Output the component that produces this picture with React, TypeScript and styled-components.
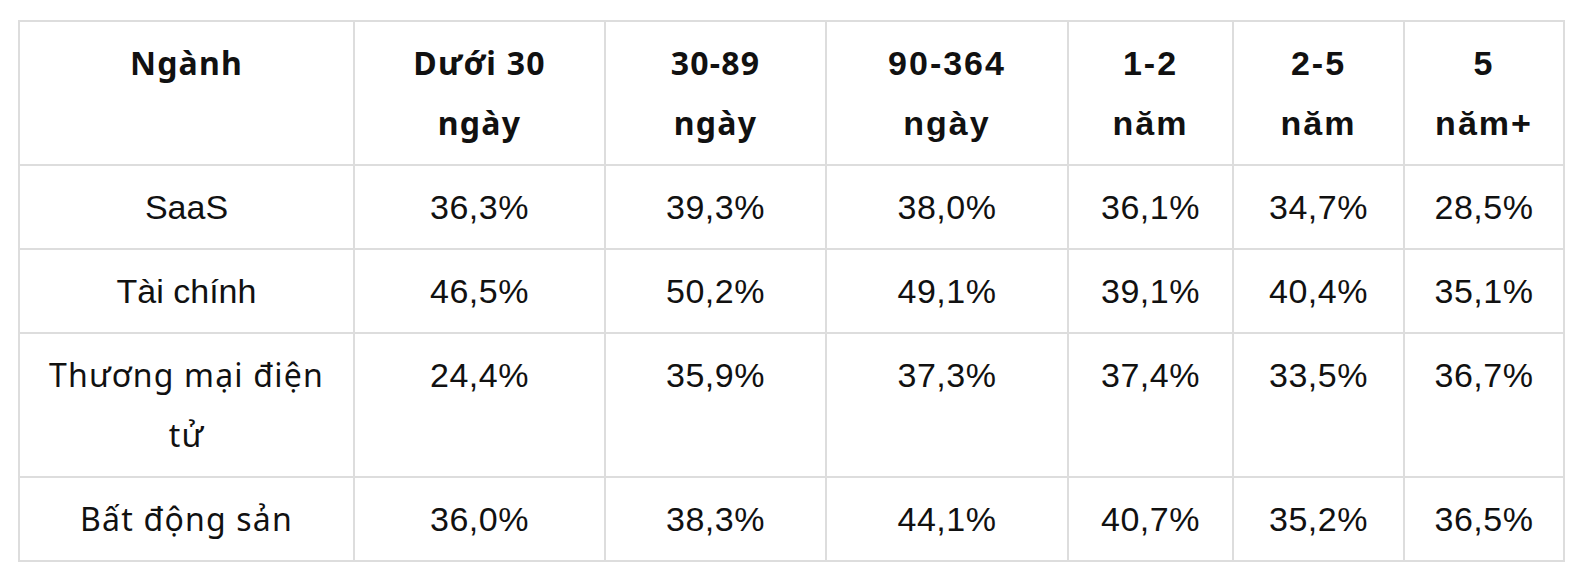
import * as React from 'react';
import styled, { createGlobalStyle } from 'styled-components';

const GlobalStyle = createGlobalStyle`
  html, body {
    margin: 0;
    padding: 0;
    background: #ffffff;
  }
`;

const Page = styled('div')`
  padding: 20px 0 0 18px;
`;

const Table = styled('table')`
  border-collapse: collapse;
  table-layout: fixed;
  color: #111111;
`;

const spacing = (alt?: boolean, head?: boolean, num?: boolean) => {
  if (alt) return '1.2px';
  if (head) return '2px';
  if (num) return '0.5px';
  return 'normal';
};

const Cell = styled('td')<{ $alt?: boolean; $head?: boolean; $num?: boolean; $w?: number }>`
  box-sizing: border-box;
  ${({ $w }) => ($w ? `width: ${$w}px;` : '')}
  border: 2px solid #dddddd;
  padding: 11px 8px 11px;
  text-align: center;
  vertical-align: top;
  font-family: ${({ $alt }) => ($alt ? '"Noto Sans", Lato, sans-serif' : '"Liberation Sans", Arial, sans-serif')};
  font-size: ${({ $alt }) => ($alt ? '32px' : '34px')};
  font-weight: ${({ $head }) => ($head ? 700 : 400)};
  letter-spacing: ${({ $alt, $head, $num }) => spacing($alt, $head, $num)};
  line-height: 60px;
`;

// column widths, measured from the grid lines
const widths = [335, 251, 221, 242, 165, 171, 160];

type C = { lines: string[]; alt?: boolean; num?: boolean };

const header: C[] = [
  { lines: ['Ngành'], alt: true },
  { lines: ['Dưới 30', 'ngày'], alt: true },
  { lines: ['30-89', 'ngày'], alt: true },
  { lines: ['90-364', 'ngày'] },
  { lines: ['1-2', 'năm'] },
  { lines: ['2-5', 'năm'] },
  { lines: ['5', 'năm+'] },
];

const rows: C[][] = [
  [{ lines: ['SaaS'] }, '36,3%', '39,3%', '38,0%', '36,1%', '34,7%', '28,5%'],
  [{ lines: ['Tài chính'] }, '46,5%', '50,2%', '49,1%', '39,1%', '40,4%', '35,1%'],
  [{ lines: ['Thương mại điện', 'tử'], alt: true }, '24,4%', '35,9%', '37,3%', '37,4%', '33,5%', '36,7%'],
  [{ lines: ['Bất động sản'], alt: true }, '36,0%', '38,3%', '44,1%', '40,7%', '35,2%', '36,5%'],
].map((r) => r.map((c) => (typeof c === 'string' ? { lines: [c], num: true } : c)));

const Lines = ({ lines }: { lines: string[] }) => (
  <>
    {lines.map((l, i) => (
      <React.Fragment key={i}>
        {i > 0 && <br />}
        {l}
      </React.Fragment>
    ))}
  </>
);

const App = () => (
  <Page>
    <GlobalStyle />
    <Table>
      <thead>
        <tr>
          {header.map((c, i) => (
            <Cell as="th" key={i} $head $alt={c.alt} $w={widths[i]}>
              <Lines lines={c.lines} />
            </Cell>
          ))}
        </tr>
      </thead>
      <tbody>
        {rows.map((r, ri) => (
          <tr key={ri}>
            {r.map((c, ci) => (
              <Cell key={ci} $alt={c.alt} $num={c.num}>
                <Lines lines={c.lines} />
              </Cell>
            ))}
          </tr>
        ))}
      </tbody>
    </Table>
  </Page>
);

export default App;
